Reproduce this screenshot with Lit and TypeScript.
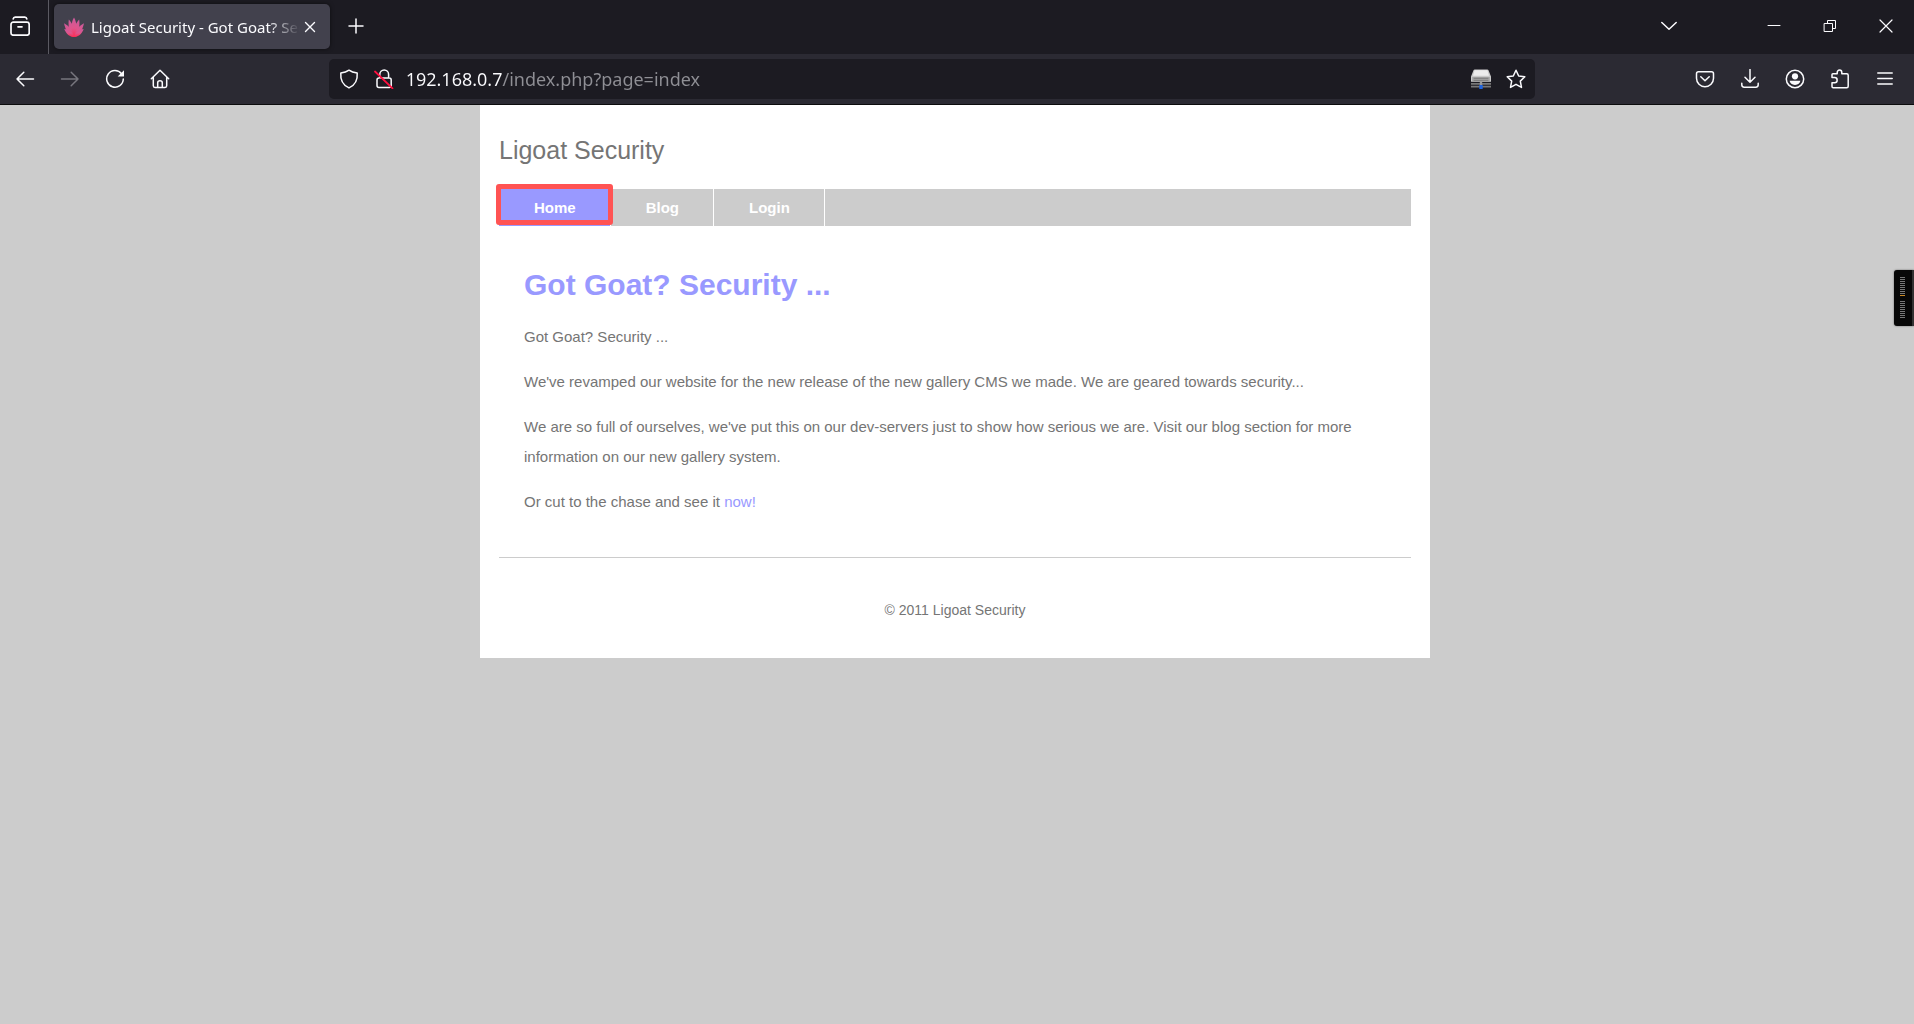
import { LitElement, html, css, svg } from "lit";
import { customElement, property } from "lit/decorators.js";

const icons: Record<string, unknown> = {
  view: svg`<g stroke-width="1.700"><path d="M3.200 2.900Q3.500 1.100 5.200 1.100h9.600q1.700 0 2 1.800"/><rect x="1" y="6.200" width="18.200" height="13" rx="2.300"/><path d="M8 10.800h4"/></g>`,
  back: svg`<path d="M18.500 10H2M8.800 3.200 2 10l6.800 6.800"/>`,
  forward: svg`<path d="M1.500 10H18M11.200 3.200 18 10l-6.800 6.800"/>`,
  reload: svg`<path d="M16.600 4.800A8.300 8.300 0 1 0 18.300 10"/><path d="M19 1.200v6.300h-6.300z" fill="currentColor" stroke="none"/>`,
  home: svg`<path d="M1.300 9.700 10 1.300l8.700 8.400M3.300 8.200v8.600q0 1.700 1.700 1.700h10q1.700 0 1.700-1.700V8.200"/><path d="M7.700 18.300v-4.600q0-1.900 2.300-1.900t2.300 1.900v4.600"/>`,
  shield: svg`<path d="M10 1.200c2.400 1.700 5.200 2.500 8.200 2.900.5 6-2 12-8.200 14.800C3.800 16.100 1.300 10.100 1.800 4.100 4.800 3.700 7.600 2.900 10 1.200z"/>`,
  lock: svg`<path d="M5.800 8.800V5.500a4.400 4.400 0 0 1 8.800 0v3.300M7 9h8.200q2 0 2 2v5.600q0 2-2 2H5q-2 0-2-2V11q0-2 2-2"/><path d="M1 2.500 18.500 19.300" stroke="#ff0f3f" stroke-width="1.800"/>`,
  server: svg`<g stroke="none"><path d="M2.500 1.200Q2.800.4 3.800.4h12.400q1 0 1.300.8L20 7.600v5.200H0V7.600z" fill="#c9c9c9"/><path d="M3.600 1.200h12.800l1.600 5.600H2z" fill="#ececec"/><path d="M1 8h18v4.200H1z" fill="#aaa"/><path d="M2.500 8.800h15v1h-15zM2.500 10.800h15v1h-15z" fill="#777"/><path d="M0 14h20v1.700H0zM0 16.700h20v1.700H0z" fill="#777"/><path d="M8.800 12.800h2.400V16H8.800z" fill="#999"/><path d="M8.300 16h3.400v4H8.300z" fill="#1e63e0"/></g>`,
  star: svg`<path d="m10 1.300 2.700 5.700 6.100.8-4.500 4.300 1.200 6.300L10 15.300l-5.500 3.100 1.200-6.300L1.200 7.800l6.100-.8z"/>`,
  pocket: svg`<path d="M3.500 2.800h13q2 0 2 2v4.400a8.500 8.500 0 0 1-17 0V4.800q0-2 2-2z"/><path d="m5.800 7.700 4.200 4 4.200-4"/>`,
  download: svg`<path d="M10 .5v12.700M5 8.200l5 5 5-5M1.800 14.200v1.600q0 2.400 2.400 2.400h11.600q2.400 0 2.400-2.400v-1.600"/>`,
  account: svg`<circle cx="10" cy="10" r="8.700"/><circle cx="10" cy="7.300" r="3.100" fill="currentColor" stroke="none"/><path d="M4.600 11.800h10.800Q14.600 15.900 10 15.900t-5.400-4.100z" fill="currentColor" stroke="none"/>`,
  puzzle: svg`<path d="M2 8.300V5.600q0-.9.900-.9h4.300V3.400a2.300 2.300 0 0 1 4.600 0v1.300h4.900q1.500 0 1.500 1.500v11q0 1.500-1.500 1.500H3.200Q2 18.700 2 17.500v-3.800h2.600a2.500 2.500 0 0 0 0-5.100H2z"/>`,
  menu: svg`<path d="M2.800 4h14.400M2.800 9.500h14.400M2.800 15h14.400"/>`,
  plus: svg`<path d="M10 3v14M3 10h14"/>`,
  chevron: svg`<path d="m2.800 6.500 7.200 6.800 7.200-6.800"/>`,
  minimize: svg`<path d="M4 9.500h12" stroke-width="1"/>`,
  restore: svg`<path d="M4.500 7.500h8v8h-8zM7.500 7.500v-3h8v8h-3" stroke-width="1"/>`,
  close: svg`<path d="m4 4 12 12M16 4 4 16" stroke-width="1.200"/>`,
  tabclose: svg`<path d="m5.500 5.500 9 9M14.500 5.500l-9 9" stroke-width="1.400"/>`,
  lotus: svg`<defs><linearGradient id="petal" x1="0" y1="0" x2="0" y2="1"><stop offset="0" stop-color="#c85a9c"/><stop offset=".5" stop-color="#e0558c"/><stop offset="1" stop-color="#ff2850"/></linearGradient></defs><g stroke="none" fill="url(#petal)"><path d="M10 20C6.500 15 6.800 5.500 10 .5c3.200 5 3.500 14.500 0 19.500z"/><path d="M10 20C5.500 17 3.800 9 4.800 2.500 9 7 11.500 14 10 20z"/><path d="M10 20c4.500-3 6.200-11 5.200-17.500C11 7 8.500 14 10 20z"/><path d="M10 20C5 19.800 1.500 13 0 6.200 5.500 9 9.500 13.500 10 20z"/><path d="M10 20c5-.2 8.500-7 10-13.800C14.500 9 10.500 13.500 10 20z"/><path d="M10 20c-4 0-8-3-9.700-8C5 12.500 9 15 10 20z"/><path d="M10 20c4 0 8-3 9.700-8C15 12.500 11 15 10 20z"/></g>`,
};

@customElement("ui-icon")
class UiIcon extends LitElement {
  static styles = css`
    :host { display: block; width: 20px; height: 20px; flex: none; }
    .glyph { display: block; width: 100%; height: 100%; }
  `;
  @property() name = "";
  render() {
    return html`<svg class="glyph" viewBox="0 0 20 20" fill="none" stroke="currentColor" stroke-width="1.500"
      stroke-linecap="round" stroke-linejoin="round" aria-hidden="true">${icons[this.name]}</svg>`;
  }
}

const iconButton = (name: string, label: string, cls = "tool", disabled = false) =>
  html`<button class=${cls} type="button" aria-label=${label} ?disabled=${disabled}><ui-icon name=${name}></ui-icon></button>`;

@customElement("browser-chrome")
class BrowserChrome extends LitElement {
  static styles = css`
    :host {
      display: block;
      color: #fbfbfe;
      font-family: "Segoe UI", "Noto Sans", sans-serif;
      border-bottom: 1px solid #0c0c0d;
    }
    button {
      display: flex; align-items: center; justify-content: center;
      padding: 0; border: 0; background: none; color: inherit; font: inherit;
    }
    button:disabled { color: #77767e; }
    .tabs { display: flex; height: 54px; background: #1c1b22; }
    .view { width: 40px; height: 52px; }
    .divider { width: 1px; margin: 0 5px 0 8px; background: #5b5a62; }
    .tab {
      display: flex; align-items: center; box-sizing: border-box;
      width: 276px; height: 45px; margin-top: 4px; padding: 0 10px;
      border-radius: 5px; background: #42414d; box-shadow: 0 0 4px #0008;
    }
    .title {
      flex: 1; min-width: 0; margin-left: 7px; overflow: hidden; white-space: nowrap;
      font-size: 15px; line-height: 24px;
      -webkit-mask-image: linear-gradient(to left, transparent, #000 32px);
      mask-image: linear-gradient(to left, transparent, #000 32px);
    }
    .add { width: 52px; height: 52px; }
    .gap { flex: 1; }
    .list { width: 52px; height: 52px; margin-right: 51px; }
    .win { width: 56px; height: 52px; }
    .bar { display: flex; align-items: center; height: 50px; padding: 0 7px 0 2px; background: #2b2a33; }
    .tool { width: 45px; height: 40px; }
    .space { flex: 10; }
    .url {
      display: flex; align-items: center; gap: 15px; flex: 81; box-sizing: border-box; min-width: 0;
      height: 40px; padding: 0 9px 0 10px; border-radius: 5px; background: #1c1b22;
    }
    .mini { width: 20px; height: 32px; }
    .address {
      flex: 1; min-width: 0; height: 32px; margin-left: -3px; padding: 0; border: 0; outline: 0;
      font-family: inherit; font-size: 18px; color: transparent; caret-color: #fff;
      background: linear-gradient(to right, #fbfbfe 97px, #8f8f95 97px);
      -webkit-background-clip: text; background-clip: text;
    }
  `;
  render() {
    return html`
      <div class="tabs">
        ${iconButton("view", "Recent browsing", "view")}
        <span class="divider"></span>
        <div class="tab">
          <ui-icon name="lotus"></ui-icon>
          <span class="title">Ligoat Security - Got Goat? Security ...</span>
          ${iconButton("tabclose", "Close tab", "mini")}
        </div>
        ${iconButton("plus", "New tab", "add")}
        <span class="gap"></span>
        ${iconButton("chevron", "List all tabs", "list")}
        ${iconButton("minimize", "Minimize", "win")}
        ${iconButton("restore", "Restore", "win")}
        ${iconButton("close", "Close", "win")}
      </div>
      <div class="bar">
        ${iconButton("back", "Back")}
        ${iconButton("forward", "Forward", "tool", true)}
        ${iconButton("reload", "Reload")}
        ${iconButton("home", "Home")}
        <span class="space"></span>
        <div class="url">
          ${iconButton("shield", "Tracking protection", "mini")}
          ${iconButton("lock", "Connection not secure", "mini")}
          <input class="address" type="text" aria-label="Address" value="192.168.0.7/index.php?page=index">
          ${iconButton("server", "Proxy", "mini")}
          ${iconButton("star", "Bookmark this page", "mini")}
        </div>
        <span class="space"></span>
        ${iconButton("pocket", "Save to Pocket")}
        ${iconButton("download", "Downloads")}
        ${iconButton("account", "Account")}
        ${iconButton("puzzle", "Extensions")}
        ${iconButton("menu", "Application menu")}
      </div>
    `;
  }
}

@customElement("site-page")
class SitePage extends LitElement {
  static styles = css`
    :host {
      display: block; padding-right: 4px;
      font-family: "Liberation Sans", Arial, sans-serif; font-size: 15px; line-height: 30px; color: #757575;
    }
    .sheet { box-sizing: border-box; max-width: 950px; margin: 0 auto; padding: 30px 19px 33px; background: #fff; }
    .brand { font-size: 25px; line-height: 30px; margin-bottom: 24px; }
    .menu { display: flex; margin: 0; padding: 0; list-style: none; background: #ccc; }
    .item { position: relative; border-right: 1px solid #fff; }
    .link {
      display: block; padding: 0 34px 0 35px; line-height: 37px;
      font-weight: bold; color: #fff; text-decoration: none;
    }
    .current { background: #99f; }
    .mark {
      position: absolute; inset: -5px -3px 1px; box-sizing: border-box;
      border: 5px solid #ff5353; border-radius: 3px; pointer-events: none;
    }
    .content { padding: 41px 25px 40px; border-bottom: 1px solid #ccc; }
    .heading { margin: 0 0 19px; font-size: 30px; line-height: 36px; color: #99f; }
    .text { margin: 0 0 15px; }
    .text:last-child { margin-bottom: 0; }
    .more { color: #99f; text-decoration: none; }
    .footer { padding-top: 37px; text-align: center; font-size: 14px; }
  `;
  render() {
    return html`
      <div class="sheet">
        <div class="brand">Ligoat Security</div>
        <nav>
          <ul class="menu">
            <li class="item"><a class="link current" href="#home">Home</a><span class="mark"></span></li>
            <li class="item"><a class="link" href="#blog">Blog</a></li>
            <li class="item"><a class="link" href="#login">Login</a></li>
          </ul>
        </nav>
        <main class="content">
          <h1 class="heading">Got Goat? Security ...</h1>
          <p class="text">Got Goat? Security ...</p>
          <p class="text">We've revamped our website for the new release of the new gallery CMS we made. We are geared towards security...</p>
          <p class="text">We are so full of ourselves, we've put this on our dev-servers just to show how serious we are. Visit our blog section for more information on our new gallery system.</p>
          <p class="text">Or cut to the chase and see it <a class="more" href="#gallery">now!</a></p>
        </main>
        <footer class="footer">© 2011 Ligoat Security</footer>
      </div>
    `;
  }
}

@customElement("app-root")
class AppRoot extends LitElement {
  static styles = css`
    :host { display: block; position: relative; min-height: 100vh; background: #ccc; }
    .widget {
      position: absolute; right: 0; top: 270px; box-sizing: border-box; width: 20px;
      display: flex; flex-direction: column; align-items: center; gap: 5px; padding: 7px 2px 8px 0;
      border-right: 2px solid #333; border-radius: 3px 0 0 3px; background: #080808; box-shadow: 0 0 2px #0008;
    }
    .meter { display: flex; flex-direction: column; gap: 1px; }
    .tick { width: 5px; height: 1px; background: #777; }
    .hot { background: #c98a26; }
  `;
  render() {
    const tick = () => html`<span class="tick"></span>`;
    const nine = Array.from({ length: 9 });
    return html`
      <browser-chrome></browser-chrome>
      <site-page></site-page>
      <div class="widget" aria-hidden="true">
        <div class="meter">${nine.map(tick)}<span class="tick hot"></span></div>
        <div class="meter">${nine.map(tick)}</div>
      </div>
    `;
  }
}
